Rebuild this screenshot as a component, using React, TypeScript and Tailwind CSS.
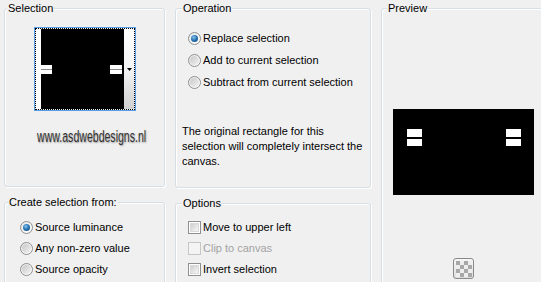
import React from "react";

function Group({
  title,
  titleLeft,
  className,
  children,
}: {
  title: string;
  titleLeft: string;
  className: string;
  children?: React.ReactNode;
}) {
  return (
    <div
      className={`relative shrink-0 border border-[#d5dfe5] rounded-[3px] shadow-[inset_1px_1px_0_#ffffff,1px_1px_0_#ffffff] ${className}`}
    >
      <div
        className={`absolute top-[-8px] ${titleLeft} bg-[#f0f0f0] px-[1px] leading-[14px] text-[11px] text-black`}
      >
        {title}
      </div>
      {children}
    </div>
  );
}

function Radio({ checked }: { checked?: boolean }) {
  return (
    <div className="w-[13px] h-[13px] rounded-full border border-[#8e8f8f] bg-gradient-to-br from-[#e6e6e6] to-[#ffffff] flex items-center justify-center shrink-0">
      {checked ? (
        <div className="w-[7px] h-[7px] rounded-full bg-[radial-gradient(circle_at_40%_35%,#8cc4ee_0%,#2a77b8_45%,#0c3f6e_100%)]" />
      ) : (
        <div className="w-[9px] h-[9px] rounded-full bg-gradient-to-br from-[#c8c8c8] to-[#f2f2f2]" />
      )}
    </div>
  );
}

function Check({ disabled }: { disabled?: boolean }) {
  return (
    <div
      className={`w-[13px] h-[13px] border ${
        disabled ? "border-[#c6c6c6] bg-[#f4f4f4]" : "border-[#8e8f8f] bg-white"
      } flex items-center justify-center shrink-0`}
    >
      {disabled ? null : (
        <div className="w-[9px] h-[9px] bg-gradient-to-br from-[#cfcfcf] to-[#f7f7f7] border border-[#d9d9d9]" />
      )}
    </div>
  );
}

function RadioRow({ label, checked, h }: { label: string; checked?: boolean; h: string }) {
  return (
    <div className={`flex items-center gap-[2px] ${h}`}>
      <Radio checked={checked} />
      <span className="leading-[13px]">{label}</span>
    </div>
  );
}

function CheckRow({ label, disabled }: { label: string; disabled?: boolean }) {
  return (
    <div className="flex items-center gap-[2px] h-[21px]">
      <Check disabled={disabled} />
      <span className={`leading-[13px] ${disabled ? "text-[#a3a3a3]" : "text-black"}`}>{label}</span>
    </div>
  );
}

function Thumb() {
  return (
    <div className="w-[102px] h-[84px] border border-[#569de5] p-0">
      <div className="w-full h-full border border-dotted border-black">
        <svg width="100%" height="100%" viewBox="0 0 98 80" preserveAspectRatio="none">
          <defs>
            <linearGradient id="strip" x1="0" y1="0" x2="0" y2="1">
              <stop offset="0" stopColor="#ffffff" />
              <stop offset="0.5" stopColor="#f4f4f4" />
              <stop offset="1" stopColor="#cfcfcf" />
            </linearGradient>
          </defs>
          <rect x="0" y="0" width="98" height="80" fill="#ffffff" />
          <rect x="5" y="0" width="83" height="80" fill="#000000" />
          <rect x="88" y="0" width="10" height="80" fill="url(#strip)" />
          <rect x="5" y="36" width="11" height="4" fill="#ffffff" />
          <rect x="5" y="40" width="11" height="1" fill="#8a8a8a" />
          <rect x="5" y="41" width="11" height="4" fill="#ffffff" />
          <rect x="74" y="36" width="12" height="4" fill="#ffffff" />
          <rect x="74" y="40" width="12" height="1" fill="#8a8a8a" />
          <rect x="74" y="41" width="12" height="4" fill="#ffffff" />
          <polygon points="91,39 96,39 93.5,42" fill="#000000" />
        </svg>
      </div>
    </div>
  );
}

function PreviewImage() {
  return (
    <svg width="141" height="86" viewBox="0 0 141 86">
      <rect x="0" y="0" width="141" height="86" fill="#000000" />
      <rect x="14" y="20" width="15" height="8" fill="#ffffff" />
      <rect x="14" y="30" width="15" height="7" fill="#ffffff" />
      <rect x="113" y="20" width="15" height="8" fill="#ffffff" />
      <rect x="113" y="30" width="15" height="7" fill="#ffffff" />
    </svg>
  );
}

function CheckerButton() {
  const cells: React.ReactNode[] = [];
  for (let r = 0; r < 4; r++) {
    for (let c = 0; c < 4; c++) {
      if ((r + c) % 2 === 0) {
        cells.push(<rect key={`${r}-${c}`} x={c * 4} y={r * 4} width="4" height="4" fill="#a8a8a8" />);
      }
    }
  }
  return (
    <div className="w-[21px] h-[21px] rounded-[3px] border border-[#8a8a8a] bg-gradient-to-b from-[#f6f6f6] to-[#dedede] flex items-center justify-center">
      <svg width="16" height="16" viewBox="0 0 16 16">
        <rect x="0" y="0" width="16" height="16" fill="#eeeeee" />
        {cells}
      </svg>
    </div>
  );
}

export default function App() {
  return (
    <div className="w-[541px] h-[282px] overflow-hidden bg-[#f0f0f0] flex items-start pt-[8px] pl-[4px] font-['Liberation_Sans',Arial,sans-serif] text-[11px] text-black">
      <div className="w-[161px] flex flex-col gap-[15px] shrink-0">
        <Group title="Selection" titleLeft="left-[2px]" className="h-[179px]">
          <div className="flex flex-col items-center pt-[18px]">
            <Thumb />
            <div className="mt-[18px] w-[112px] ml-[16px] h-[16px] overflow-visible">
              <div className="origin-left scale-x-[0.66] whitespace-nowrap text-[16px] leading-[16px] text-[#333333] [text-shadow:1px_1px_2px_#9a9a9a] font-['Liberation_Sans',Arial,sans-serif]">
                www.asdwebdesigns.nl
              </div>
            </div>
          </div>
        </Group>
        <Group title="Create selection from:" titleLeft="left-[3px]" className="h-[120px]">
          <div className="flex flex-col pt-[14px] pl-[15px]">
            <RadioRow label="Source luminance" checked h="h-[21px]" />
            <RadioRow label="Any non-zero value" h="h-[21px]" />
            <RadioRow label="Source opacity" h="h-[21px]" />
          </div>
        </Group>
      </div>

      <div className="w-[196px] ml-[10px] flex flex-col gap-[15px] shrink-0">
        <Group title="Operation" titleLeft="left-[6px]" className="h-[180px]">
          <div className="flex flex-col pt-[18px] pl-[12px]">
            <RadioRow label="Replace selection" checked h="h-[22px]" />
            <RadioRow label="Add to current selection" h="h-[22px]" />
            <RadioRow label="Subtract from current selection" h="h-[22px]" />
          </div>
          <div className="mt-[31px] pl-[6px] pr-[4px] leading-[15px]">
            The original rectangle for this
            <br />
            selection will completely intersect the
            <br />
            canvas.
          </div>
        </Group>
        <Group title="Options" titleLeft="left-[6px]" className="h-[120px]">
          <div className="flex flex-col pt-[13px] pl-[12px]">
            <CheckRow label="Move to upper left" />
            <CheckRow label="Clip to canvas" disabled />
            <CheckRow label="Invert selection" />
          </div>
        </Group>
      </div>

      <div className="w-[170px] ml-[10px] shrink-0">
        <Group title="Preview" titleLeft="left-[5px]" className="h-[300px]">
          <div className="flex flex-col pt-[100px] pl-[11px]">
            <PreviewImage />
            <div className="mt-[63px] ml-[60px]">
              <CheckerButton />
            </div>
          </div>
        </Group>
      </div>
    </div>
  );
}
